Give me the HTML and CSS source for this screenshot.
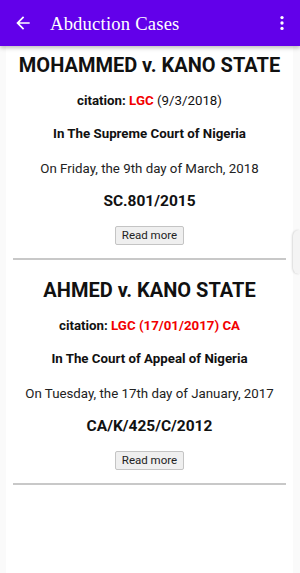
FILE: index.html
```html
<!doctype html>
<html lang="en">
    <head>
        <title>Abduction Cases</title>
        <link rel="stylesheet" href="styles.css">
    </head>
    <body>
        <header class="app-bar">
            <button class="icon-button back" aria-label="Back">
                <svg viewBox="0 0 24 24" width="20" height="20">
                    <path d="M20 11H7.83l5.59-5.59L12 4l-8 8 8 8 1.41-1.41L7.83 13H20v-2z" fill="#fff"/>
                </svg>
            </button>
            <h1 class="app-title">Abduction Cases</h1>
            <button class="icon-button menu" aria-label="More">
                <svg viewBox="0 0 24 24" width="20" height="20">
                    <circle cx="12" cy="5.5" r="2" fill="#fff"/>
                    <circle cx="12" cy="12" r="2" fill="#fff"/>
                    <circle cx="12" cy="18.5" r="2" fill="#fff"/>
                </svg>
            </button>
        </header>

        <main class="case-list">
            <!-- case 1 -->
            <section class="case">
                <h2 class="case-title">MOHAMMED v. KANO STATE</h2>
                <p class="citation">citation: <span class="lgc">LGC</span> <span class="cite-date">(9/3/2018)</span></p>
                <p class="court">In The Supreme Court of Nigeria</p>
                <p class="date">On Friday, the 9th day of March, 2018</p>
                <p class="suit-no">SC.801/2015</p>
                <button class="read-more">Read more</button>
                <hr class="divider">
            </section>

            <!-- case 2 -->
            <section class="case">
                <h2 class="case-title">AHMED v. KANO STATE</h2>
                <p class="citation">citation: <span class="lgc">LGC (17/01/2017) CA</span></p>
                <p class="court">In The Court of Appeal of Nigeria</p>
                <p class="date">On Tuesday, the 17th day of January, 2017</p>
                <p class="suit-no">CA/K/425/C/2012</p>
                <button class="read-more">Read more</button>
                <hr class="divider">
            </section>
        </main>

        <div class="edge-handle"></div>
    </body>
</html>
```

FILE: styles.css
```css
body {
    font-family: Roboto, "Liberation Sans", sans-serif;
    background: #fafafa;
    color: #111;
    margin: 0;
    padding: 0;
    height: 100vh;
    display: flex;
    flex-direction: column;
    overflow: hidden;
}
.app-bar {
    height: 46px;
    flex-shrink: 0;
    display: flex;
    align-items: center;
    background: #6200ea;
    color: white;
    box-shadow: 0 2px 4px rgba(0, 0, 0, 0.25);
    position: relative;
    z-index: 1;
}
.icon-button {
    background: none;
    border: none;
    padding: 0;
    width: 20px;
    height: 20px;
    display: flex;
}
.back {
    margin-left: 13px;
}
.menu {
    margin-left: auto;
    margin-right: 8px;
}
.app-title {
    font-family: "Liberation Serif", "DejaVu Serif", serif;
    font-size: 18.6px;
    font-weight: normal;
    margin: 2px 0 0 17px;
    letter-spacing: 0.2px;
}
.case-list {
    flex: 1;
    background: white;
    margin: 0 7px 0 6px;
    padding: 0 7px;
}
.case {
    display: flex;
    flex-direction: column;
    align-items: center;
    text-align: center;
}
.case-title {
    font-size: 20px;
    font-weight: 700;
    line-height: 24px;
    margin: 7px 0 0;
    color: #111;
}
.case + .case .case-title {
    margin-top: 18px;
}
.citation,
.court {
    font-size: 13.3px;
    font-weight: 700;
    line-height: 20px;
    margin: 0;
}
.citation {
    margin-top: 14px;
}
.court {
    margin-top: 13px;
}
.lgc {
    color: #f20000;
}
.cite-date {
    font-weight: 400;
}
.date {
    font-size: 13.3px;
    line-height: 20px;
    margin: 15px 0 0;
    color: #222;
}
.suit-no {
    font-size: 15.5px;
    font-weight: 700;
    line-height: 20px;
    margin: 12px 0 0;
}
.read-more {
    margin-top: 15px;
    font-family: Roboto, "Liberation Sans", sans-serif;
    font-size: 11.5px;
    color: #222;
    background: #efefef;
    border: 1px solid #c4c4c4;
    border-radius: 2px;
    height: 19px;
    padding: 0 6px;
    line-height: 17px;
}
.divider {
    width: 100%;
    border: none;
    height: 2px;
    background: #c8c8c8;
    margin: 13px 0 0;
}
/* samsung edge panel tab */
.edge-handle {
    position: fixed;
    right: 0;
    top: 230px;
    width: 7px;
    height: 44px;
    background: #f4f4f4;
    border-radius: 6px 0 0 6px;
    box-shadow: -1px 0 2px rgba(0, 0, 0, 0.15);
}
```
